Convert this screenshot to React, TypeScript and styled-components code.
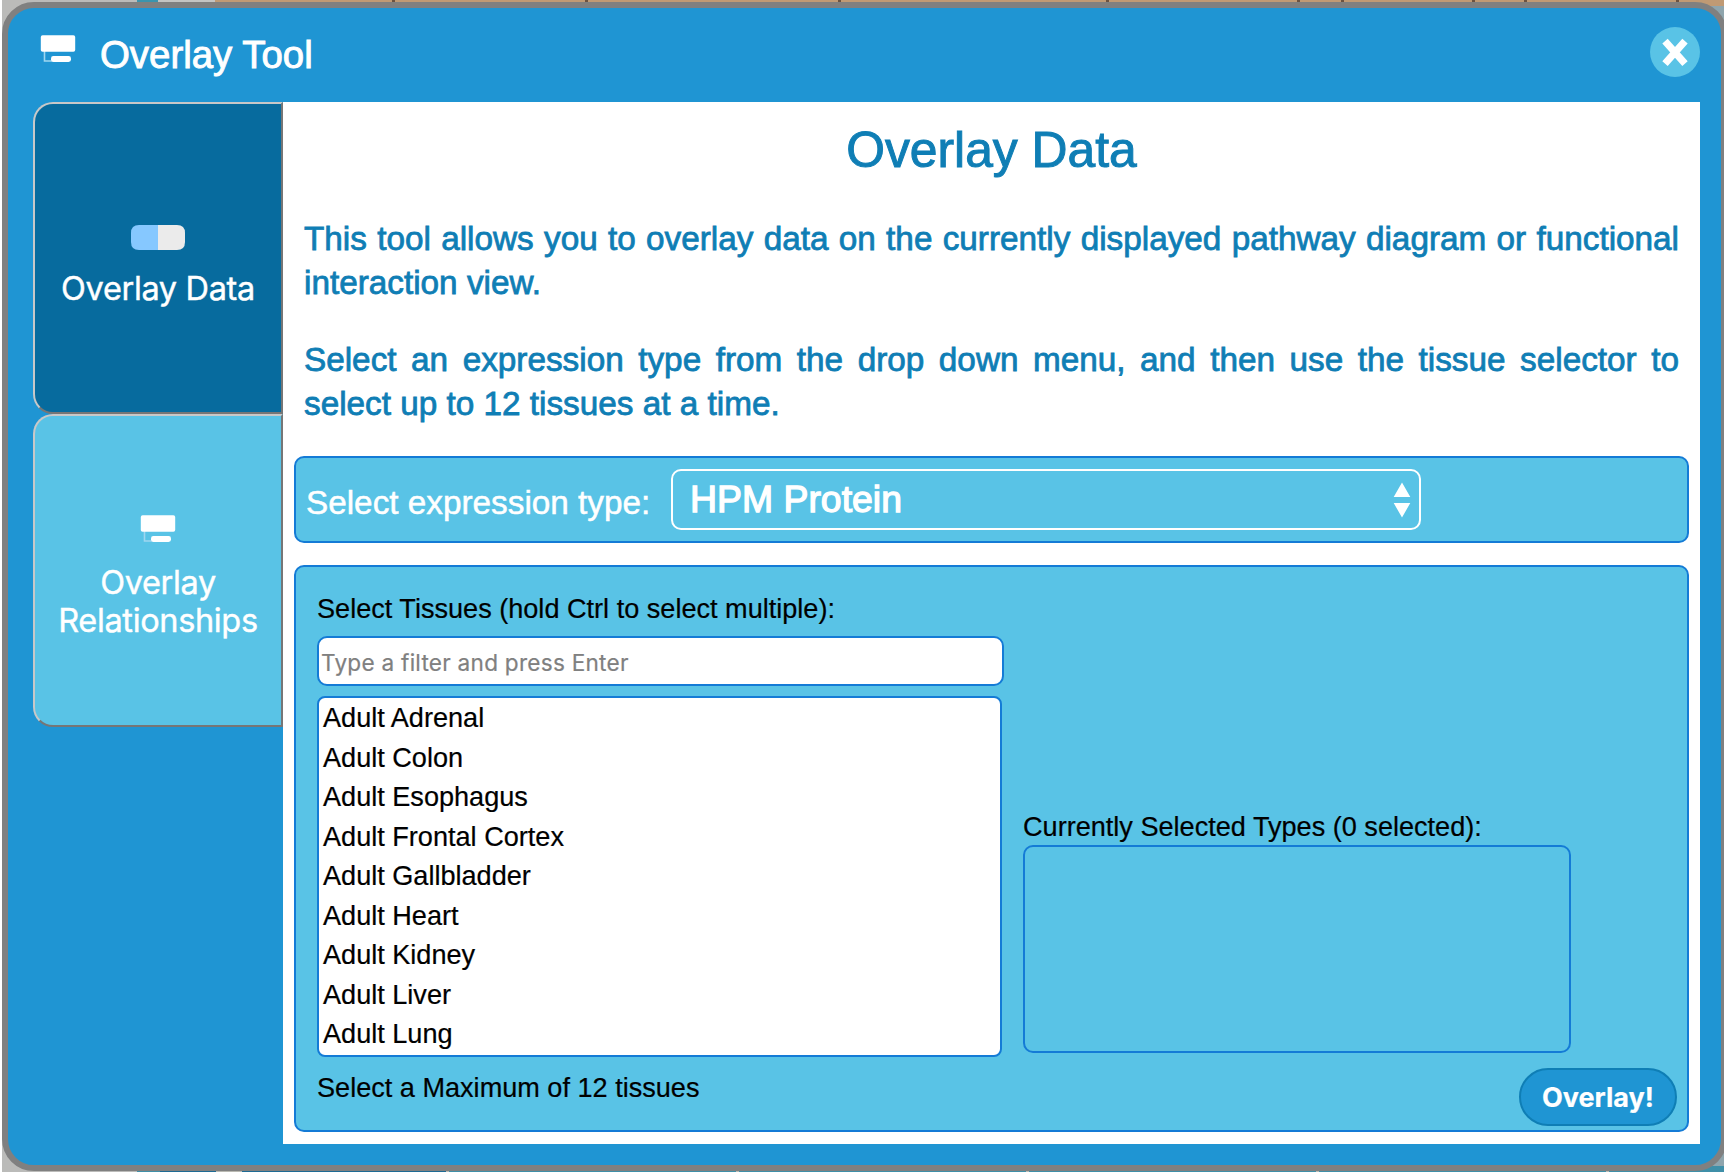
import React from "react";
import styled, { createGlobalStyle } from "styled-components";

const Global = createGlobalStyle`
  * { box-sizing: border-box; }
  body { margin: 0; background: #fff; overflow: hidden; font-family: "Liberation Sans", Arial, sans-serif; }
`;

/* Slivers of the pathway diagram that stay visible around the dialog. */
const strip = (ticks: number[], tickColor: string, base: string, from: number) => {
  const stops: string[] = [];
  let x = from;
  ticks.forEach((t) => {
    stops.push(`${base} ${x}px ${t}px`, `${tickColor} ${t}px ${t + 3}px`);
    x = t + 3;
  });
  return `${stops.join(", ")}, ${base} ${x}px`;
};

const topStrip = strip([390, 583, 836, 1104, 1295, 1339, 1470, 1522, 1674], "#6b5240", "#c09a74", 213);
const bottomStrip = strip([734, 1024, 1314, 1604], "#b9b9b2", "#3f8fa8", 447);

const Page = styled.div`
  width: 1724px;
  height: 1172px;
  padding-top: 2px;
  border-left: 2px solid #fff;
  overflow: hidden;
  background:
    linear-gradient(90deg, #bbbbb9 0 135px, #3b94ad 135px 156px, #c4c4c2 156px 213px, ${topStrip}) 0 0 / 100% 6px no-repeat,
    linear-gradient(90deg, #bbbbb9 0 135px, #3f8fa8 135px 158px, #1d6a94 158px 214px, #b9b9b2 214px 240px, #1d6a94 240px 444px, #b9b9b2 444px 447px, ${bottomStrip}) 0 100% / 100% 6px no-repeat,
    linear-gradient(90deg, #bbbbb9 50%, #8fa5ad 50%);
`;

const Dialog = styled.div`
  width: 1725px;
  height: 1169px;
  border: 6px solid #808080;
  border-radius: 32px;
  background: #1f95d3;
  display: flex;
  flex-direction: column;
`;

const TitleBar = styled.header`
  height: 94px;
  flex: none;
  display: flex;
  align-items: flex-start;
  padding: 19px 21px 0 31px;
`;

const TitleIcon = styled.span`
  display: flex;
  margin-top: 7px;
`;

const Title = styled.h1`
  flex: 1;
  margin: 5px 0 0 23px;
  color: #fff;
  font-size: 38.4px;
  line-height: 45px;
  font-weight: 400;
  -webkit-text-stroke: 0.9px #fff;
`;

const CloseButton = styled.button`
  width: 50px;
  height: 50px;
  padding: 0;
  border: 0;
  border-radius: 50%;
  background: #59c3e6;
`;

const Body = styled.div`
  display: flex;
  height: 1042px;
  padding: 0 21px 0 25px;
`;

const Tabs = styled.nav`
  width: 250px;
  flex: none;
`;

const Tab = styled.button<{ $active?: boolean; $drop: number }>`
  width: 250px;
  height: 312.4px;
  display: flex;
  flex-direction: column;
  align-items: center;
  justify-content: center;
  padding: ${(p) => p.$drop}px 0 0;
  border: 2px solid;
  border-color: #c8c8c8 #767676 #767676 #c8c8c8;
  border-radius: 20px 0 0 20px;
  background: ${(p) => (p.$active ? "#076b9e" : "#59c3e6")};
  color: #fff;
  font: 400 32.5px/37.5px Inter, sans-serif;
  letter-spacing: -0.35px;
  -webkit-text-stroke: 0.4px #fff;
`;

const TabLabel = styled.span`
  margin-top: 20.5px;
`;

const Content = styled.main`
  flex: 1;
  background: #fff;
  padding: 0 11px;
  color: #0f7eb5;
`;

const Heading = styled.h2`
  margin: 0;
  padding-top: 18.5px;
  height: 114.5px;
  text-align: center;
  font-size: 49.8px;
  line-height: 58px;
  font-weight: 400;
  -webkit-text-stroke: 1px #0f7eb5;
`;

const Paragraph = styled.p`
  margin: 0 10px 33px;
  text-align: justify;
  font-size: 33.3px;
  line-height: 44px;
  -webkit-text-stroke: 0.8px #0f7eb5;
  &:last-of-type { margin-bottom: 30.5px; }
`;

const Panel = styled.section`
  border: 2px solid #147bd6;
  border-radius: 10px;
  background: #59c3e6;
`;

const TypePanel = styled(Panel)`
  height: 87px;
  display: flex;
  padding: 11px 10px;
  color: #fff;
`;

const TypeLabel = styled.label`
  width: 365px;
  font-size: 33.3px;
  line-height: 68px;
  -webkit-text-stroke: 0.5px #fff;
`;

const TypeSelect = styled.div`
  width: 750px;
  height: 61px;
  display: flex;
  align-items: center;
  justify-content: space-between;
  padding: 0 8px 0 17px;
  border: 2px solid #fff;
  border-radius: 10px;
  font-size: 37.4px;
  -webkit-text-stroke: 1.3px #fff;
`;

const TissuePanel = styled(Panel)`
  margin-top: 21.5px;
  height: 567px;
  padding: 24px 10px 0 21px;
  color: #000;
  font-size: 27.1px;
  line-height: 36px;
  -webkit-text-stroke: 0.2px currentColor;
`;

const Columns = styled.div`
  display: flex;
  gap: 19px;
`;

const TissueColumn = styled.div`
  width: 687px;
`;

const FilterInput = styled.input`
  display: block;
  width: 687px;
  height: 50px;
  margin: 9.5px 0 10px;
  padding: 3px 2px 0;
  border: 2px solid #147bd6;
  border-radius: 10px;
  background: #fff;
  font: 400 22.6px Inter, sans-serif;
  letter-spacing: 0.25px;
  &::placeholder { color: #808080; opacity: 1; }
`;

const TissueList = styled.ul`
  width: 684.5px;
  height: 360.5px;
  margin: 0;
  padding: 0 4px;
  overflow: hidden;
  list-style: none;
  border: 2px solid #147bd6;
  border-radius: 8px;
  background: #fff;
`;

const Tissue = styled.li`
  height: 39.55px;
  line-height: 40.5px;
`;

const SelectedColumn = styled.div`
  padding-top: 218px;
`;

const SelectedBox = styled.div`
  width: 548px;
  height: 208px;
  border: 2px solid #147bd6;
  border-radius: 10px;
`;

const Footer = styled.footer`
  display: flex;
  justify-content: space-between;
  align-items: flex-start;
`;

const Limit = styled.span`
  margin-top: 13px;
`;

const OverlayButton = styled.button`
  width: 158px;
  height: 58px;
  margin-top: 11.5px;
  padding: 0;
  border: 2px solid #0f7eb5;
  border-radius: 29px;
  background: #1f95d3;
  color: #fff;
  font: 700 27px Inter, sans-serif;
`;

const BoardIcon = () => (
  <svg width="38" height="30" viewBox="0 0 38 30">
    <path d="M5.5 17v10H14" fill="none" stroke="#9ed6f0" strokeWidth="1.6" />
    <rect x="1.8" y="1.3" width="34.4" height="16.4" rx="1.8" fill="#fff" />
    <rect x="12" y="22" width="20" height="6" rx="2.4" fill="#fff" />
  </svg>
);

const PillIcon = () => (
  <svg width="54" height="25" viewBox="0 0 54 25">
    <path d="M8 0H27V25H8Q0 25 0 17V8Q0 0 8 0Z" fill="#86c8ff" />
    <path d="M27 0H46Q54 0 54 8V17Q54 25 46 25H27Z" fill="#ebebeb" />
  </svg>
);

const CloseIcon = () => (
  <svg width="50" height="50" viewBox="0 0 50 50">
    <path d="M15 14.2L35 36.6M35 14.2L15 36.6" stroke="#fff" strokeWidth="7.2" />
  </svg>
);

const SortIcon = () => (
  <svg width="18" height="36" viewBox="0 0 18 36">
    <path d="M9 0.5L17.3 15H.7ZM9 35.5L17.3 21H.7Z" fill="#fff" />
  </svg>
);

const tissues = [
  "Adult Adrenal", "Adult Colon", "Adult Esophagus", "Adult Frontal Cortex", "Adult Gallbladder",
  "Adult Heart", "Adult Kidney", "Adult Liver", "Adult Lung",
];

export default function App() {
  return (
    <Page>
      <Global />
      <Dialog>
        <TitleBar>
          <TitleIcon><BoardIcon /></TitleIcon>
          <Title>Overlay Tool</Title>
          <CloseButton aria-label="Close"><CloseIcon /></CloseButton>
        </TitleBar>
        <Body>
          <Tabs>
            <Tab $active $drop={16}><PillIcon /><TabLabel>Overlay Data</TabLabel></Tab>
            <Tab $drop={11.5}><BoardIcon /><TabLabel>Overlay<br />Relationships</TabLabel></Tab>
          </Tabs>
          <Content>
            <Heading>Overlay Data</Heading>
            <Paragraph>
              This tool allows you to overlay data on the currently displayed pathway diagram or functional interaction view.
            </Paragraph>
            <Paragraph>
              Select an expression type from the drop down menu, and then use the tissue selector to select up to 12 tissues at a time.
            </Paragraph>
            <TypePanel>
              <TypeLabel>Select expression type:</TypeLabel>
              <TypeSelect><span>HPM Protein</span><SortIcon /></TypeSelect>
            </TypePanel>
            <TissuePanel>
              <Columns>
                <TissueColumn>
                  <div>Select Tissues (hold Ctrl to select multiple):</div>
                  <FilterInput placeholder="Type a filter and press Enter" />
                  <TissueList>{tissues.map((t) => <Tissue key={t}>{t}</Tissue>)}</TissueList>
                </TissueColumn>
                <SelectedColumn>
                  <div>Currently Selected Types (0 selected):</div>
                  <SelectedBox />
                </SelectedColumn>
              </Columns>
              <Footer>
                <Limit>Select a Maximum of 12 tissues</Limit>
                <OverlayButton>Overlay!</OverlayButton>
              </Footer>
            </TissuePanel>
          </Content>
        </Body>
      </Dialog>
    </Page>
  );
}
